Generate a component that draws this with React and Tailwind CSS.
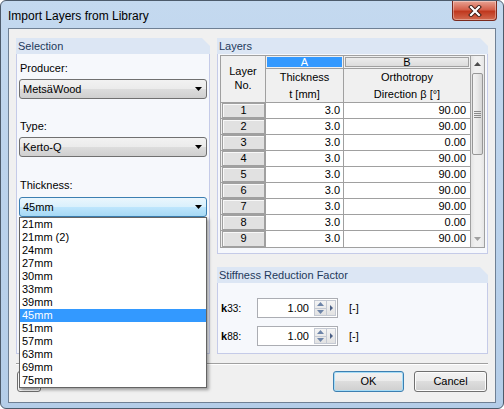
import React from "react";

const thicknesses = ["21mm", "21mm (2)", "24mm", "27mm", "30mm", "33mm", "39mm", "45mm", "51mm", "57mm", "63mm", "69mm", "75mm"];

const layers = [
  [1, "3.0", "90.00"],
  [2, "3.0", "90.00"],
  [3, "3.0", "0.00"],
  [4, "3.0", "90.00"],
  [5, "3.0", "90.00"],
  [6, "3.0", "90.00"],
  [7, "3.0", "90.00"],
  [8, "3.0", "0.00"],
  [9, "3.0", "90.00"],
];

function Caret() {
  return (
    <svg width="7" height="4" viewBox="0 0 7 4">
      <polygon points="0,0 7,0 3.5,4" fill="#000" />
    </svg>
  );
}

function Combo({ value, active }) {
  return (
    <div
      className={`flex h-[20px] items-center justify-between rounded-[3px] border pl-[3px] pr-[4px] ${
        active
          ? "border-[#3c7fb1] bg-[linear-gradient(#eaf6fd,#d9f0fc_50%,#bee6fd_50%,#a7d9f5)]"
          : "border-[#707070] bg-[linear-gradient(#f2f2f2,#ebebeb_50%,#dddddd_50%,#cfcfcf)]"
      }`}
    >
      <span className="leading-[13px]">{value}</span>
      <Caret />
    </div>
  );
}

function Panel({ title, className, bodyClass, children }) {
  return (
    <div className={`flex flex-col ${className}`}>
      <div className="h-[16px] shrink-0 bg-[#dce6f4] pl-[2px] leading-[16px] text-[#1e395b] [clip-path:polygon(0_0,calc(100%-8px)_0,100%_8px,100%_100%,0_100%)]">
        {title}
      </div>
      <div className={`flex-1 border-x border-b border-[#c5cbe8] bg-[#f6f8fc] ${bodyClass || ""}`}>{children}</div>
    </div>
  );
}

function Spin({ value }) {
  return (
    <div className="flex h-[20px] w-[81px] items-stretch border border-[#abadb3] bg-white">
      <div className="flex-1 pr-[5px] text-right leading-[18px]">{value}</div>
      <div className="my-[1px] flex w-[13px] flex-col border border-[#c4c9d3] bg-[linear-gradient(#f4f4f4,#e2e2e2)]">
        <div className="flex flex-1 items-center justify-center border-b border-[#c4c9d3]">
          <svg width="7" height="4" viewBox="0 0 7 4">
            <polygon points="0,4 7,4 3.5,0" fill="#6d84a8" />
          </svg>
        </div>
        <div className="flex flex-1 items-center justify-center">
          <svg width="7" height="4" viewBox="0 0 7 4">
            <polygon points="0,0 7,0 3.5,4" fill="#6d84a8" />
          </svg>
        </div>
      </div>
      <div className="my-[1px] mr-[1px] flex w-[9px] items-center justify-center border border-l-0 border-[#c4c9d3] bg-[linear-gradient(#f4f4f4,#e2e2e2)]">
        <svg width="3" height="6" viewBox="0 0 3 6">
          <polygon points="0,0 3,3 0,6" fill="#4a5f85" />
        </svg>
      </div>
    </div>
  );
}

function Btn({ children, focused, className }) {
  return (
    <div
      className={`flex h-[21px] items-center justify-center rounded-[3px] border bg-[linear-gradient(#f2f2f2,#ebebeb_50%,#dddddd_50%,#cfcfcf)] ${
        focused ? "border-[#3c7fb1] shadow-[inset_0_0_0_1px_#a6dcf6]" : "border-[#707070] shadow-[inset_0_0_0_1px_#fcfcfc]"
      } ${className || ""}`}
    >
      {children}
    </div>
  );
}

export default function App() {
  return (
    <div className="h-[409px] w-[504px] overflow-hidden rounded-[6px] border border-[#4d5b6b] bg-[linear-gradient(180deg,#c4d9ef,#bcd3ec_40%,#b4cde8)] font-['Liberation_Sans',Arial,sans-serif] text-[11px] text-black">
      {/* title bar */}
      <div className="flex h-[27px] items-start justify-between">
        <div className="pl-[7px] pt-[8px] text-[12px] leading-[14px]">Import Layers from Library</div>
        <div className="mr-[6px] flex h-[20px] w-[45px] items-center justify-center rounded-b-[4px] border border-t-0 border-[#7a2a1e] bg-[linear-gradient(#e8a393,#d4604b_45%,#c0391f_55%,#d26a50)] shadow-[inset_0_0_0_1px_rgba(255,255,255,0.35)]">
          <svg width="14" height="12" viewBox="0 0 14 12">
            <path d="M3 2 L11 10 M11 2 L3 10" stroke="#3a1a14" strokeWidth="4" strokeLinecap="square" />
            <path d="M3 2 L11 10 M11 2 L3 10" stroke="#fff" strokeWidth="2.2" strokeLinecap="square" />
          </svg>
        </div>
      </div>

      {/* client area */}
      <div className="mx-[7px] flex h-[375px] flex-col border border-[#6f8094] bg-[#f0f0f0]">
        <div className="flex gap-[7px] pl-[7px] pt-[9px]">
          <Panel title="Selection" className="h-[316px] w-[194px]" bodyClass="px-[2px] pt-[8px]">
            <div className="pl-[1px] leading-[13px]">Producer:</div>
            <div className="mt-[4px]">
              <Combo value="MetsäWood" />
            </div>
            <div className="mt-[21px] pl-[1px] leading-[13px]">Type:</div>
            <div className="mt-[4px]">
              <Combo value="Kerto-Q" />
            </div>
            <div className="mt-[22px] pl-[1px] leading-[13px]">Thickness:</div>
            <div className="relative mt-[5px]">
              <Combo value="45mm" active />
              <div className="absolute left-0 top-full z-10 w-full border border-[#646464] bg-white shadow-[2px_2px_3px_rgba(0,0,0,0.35)]">
                {thicknesses.map((t) => (
                  <div
                    key={t}
                    className={`h-[13px] pl-[2px] leading-[13px] ${t === "45mm" ? "bg-[#3399ff] text-white" : ""}`}
                  >
                    {t}
                  </div>
                ))}
              </div>
            </div>
          </Panel>

          <div className="flex w-[271px] flex-col gap-[13px]">
            <Panel title="Layers" className="h-[216px]" bodyClass="px-[2px] pt-[1px]">
              <div className="flex border border-[#a0a0a0] bg-white">
                <div className="grid grid-cols-[45px_78px_127px] grid-rows-[13px_34px]">
                  <div className="row-span-2 flex flex-col items-center justify-center border-b border-r border-[#a0a0a0] bg-[#f0f0f0] pb-[2px] leading-[14px]">
                    <span>Layer</span>
                    <span>No.</span>
                  </div>
                  <div className="border-b border-r border-[#a0a0a0] bg-[#f0f0f0] p-[1px]">
                    <div className="h-full bg-[#3399ff] text-center leading-[11px] text-white">A</div>
                  </div>
                  <div className="border-b border-r border-[#a0a0a0] bg-[#f0f0f0] p-[1px]">
                    <div className="h-full border border-[#a0a0a0] bg-[linear-gradient(#ececec,#dcdcdc)] text-center leading-[9px]">B</div>
                  </div>
                  <div className="flex flex-col items-center justify-center border-b border-r border-[#a0a0a0] bg-[#f0f0f0] leading-[17px]">
                    <span>Thickness</span>
                    <span>t [mm]</span>
                  </div>
                  <div className="flex flex-col items-center justify-center border-b border-r border-[#a0a0a0] bg-[#f0f0f0] leading-[17px]">
                    <span>Orthotropy</span>
                    <span>Direction β [°]</span>
                  </div>
                  {layers.map(([n, t, d], i) => (
                    <React.Fragment key={n}>
                      <div className={`h-[16px] border-r border-[#a0a0a0] bg-[#f0f0f0] pl-[1px] ${i < 8 ? "border-b" : ""}`}>
                        <div className="h-full border border-[#a0a0a0] bg-[#e1e1e1] text-center leading-[13px] shadow-[inset_1px_1px_0_#f8f8f8]">{n}</div>
                      </div>
                      <div className={`h-[16px] border-r border-[#a0a0a0] pr-[3px] text-right leading-[15px] ${i < 8 ? "border-b" : ""}`}>{t}</div>
                      <div className={`h-[16px] border-r border-[#a0a0a0] pr-[4px] text-right leading-[15px] ${i < 8 ? "border-b" : ""}`}>{d}</div>
                    </React.Fragment>
                  ))}
                </div>

                {/* scrollbar */}
                <div className="flex w-[16px] flex-col bg-[linear-gradient(90deg,#e3e3e3,#f0f0f0_30%,#f0f0f0_70%,#e6e6e6)]">
                  <div className="flex h-[16px] items-center justify-center">
                    <svg width="7" height="4" viewBox="0 0 7 4">
                      <polygon points="0,4 7,4 3.5,0" fill="#4d4d4d" />
                    </svg>
                  </div>
                  <div className="mx-[1px] mt-[1px] flex h-[82px] flex-col items-center justify-center gap-[1px] rounded-[2px] border border-[#979797] bg-[linear-gradient(90deg,#f3f3f3,#e8e8e8_50%,#d6d6d6)]">
                    <div className="h-[1px] w-[7px] bg-[#8a8a8a]" />
                    <div className="h-[1px] w-[7px] bg-[#8a8a8a]" />
                    <div className="h-[1px] w-[7px] bg-[#8a8a8a]" />
                    <div className="h-[1px] w-[7px] bg-[#8a8a8a]" />
                  </div>
                  <div className="flex-1" />
                  <div className="flex h-[16px] items-center justify-center">
                    <svg width="7" height="4" viewBox="0 0 7 4">
                      <polygon points="0,0 7,0 3.5,4" fill="#a0a0a0" />
                    </svg>
                  </div>
                </div>
              </div>
            </Panel>

            <Panel title="Stiffness Reduction Factor" className="flex-1" bodyClass="pl-[3px] pt-[15px]">
              <div className="flex items-center">
                <div className="w-[36px] leading-[13px]">
                  <span className="font-bold">k</span>
                  <span className="text-[10px]">33</span>:
                </div>
                <Spin value="1.00" />
                <span className="ml-[11px]">[-]</span>
              </div>
              <div className="mt-[8px] flex items-center">
                <div className="w-[36px] leading-[13px]">
                  <span className="font-bold">k</span>
                  <span className="text-[10px]">88</span>:
                </div>
                <Spin value="1.00" />
                <span className="ml-[11px]">[-]</span>
              </div>
            </Panel>
          </div>
        </div>

        {/* separator */}
        <div className="mx-[7px] mt-[9px] h-[2px] border-t border-b border-t-[#a0a0a0] border-b-white" />

        {/* buttons */}
        <div className="mt-[6px] flex items-center pl-[8px] pr-[8px]">
          <Btn className="w-[24px]" />
          <Btn focused className="ml-auto w-[71px]">OK</Btn>
          <Btn className="ml-[10px] w-[73px]">Cancel</Btn>
        </div>
      </div>
    </div>
  );
}
